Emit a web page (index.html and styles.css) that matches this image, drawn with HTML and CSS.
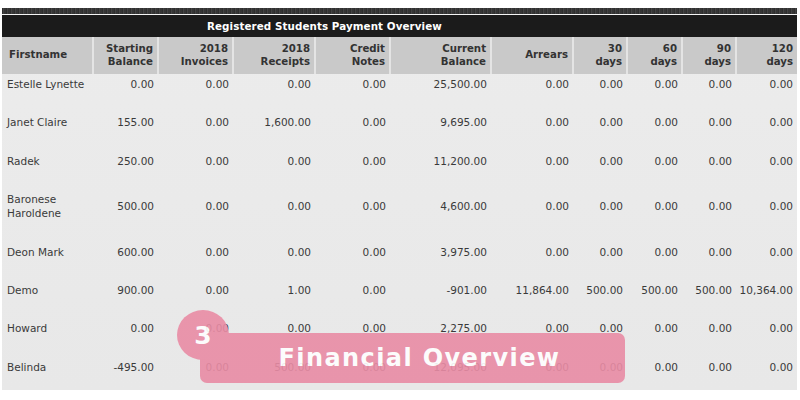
FILE: index.html
```html
<!DOCTYPE html>
<html>
<head>
<meta charset="utf-8">
<link rel="stylesheet" href="styles.css">
</head>
<body>
<div class="page">
  <div class="topbar"></div>
  <div class="titlebar"><span class="title">Registered Students Payment Overview</span></div>
  <table class="grid">
    <colgroup>
      <col style="width:91px"><col style="width:65px"><col style="width:75px"><col style="width:82px"><col style="width:75px"><col style="width:101px"><col style="width:82px"><col style="width:54px"><col style="width:55px"><col style="width:54px"><col style="width:61px">
    </colgroup>
    <thead>
      <tr>
        <th class="name">Firstname</th>
        <th>Starting<br>Balance</th>
        <th>2018<br>Invoices</th>
        <th>2018<br>Receipts</th>
        <th>Credit<br>Notes</th>
        <th>Current<br>Balance</th>
        <th>Arrears</th>
        <th>30<br>days</th>
        <th>60<br>days</th>
        <th>90<br>days</th>
        <th>120<br>days</th>
      </tr>
    </thead>
    <tbody>
      <tr><td class="name">Estelle Lynette</td><td>0.00</td><td>0.00</td><td>0.00</td><td>0.00</td><td>25,500.00</td><td>0.00</td><td>0.00</td><td>0.00</td><td>0.00</td><td>0.00</td></tr>
      <tr><td class="name">Janet Claire</td><td>155.00</td><td>0.00</td><td>1,600.00</td><td>0.00</td><td>9,695.00</td><td>0.00</td><td>0.00</td><td>0.00</td><td>0.00</td><td>0.00</td></tr>
      <tr><td class="name">Radek</td><td>250.00</td><td>0.00</td><td>0.00</td><td>0.00</td><td>11,200.00</td><td>0.00</td><td>0.00</td><td>0.00</td><td>0.00</td><td>0.00</td></tr>
      <tr><td class="name">Baronese<br>Haroldene</td><td>500.00</td><td>0.00</td><td>0.00</td><td>0.00</td><td>4,600.00</td><td>0.00</td><td>0.00</td><td>0.00</td><td>0.00</td><td>0.00</td></tr>
      <tr><td class="name">Deon Mark</td><td>600.00</td><td>0.00</td><td>0.00</td><td>0.00</td><td>3,975.00</td><td>0.00</td><td>0.00</td><td>0.00</td><td>0.00</td><td>0.00</td></tr>
      <tr><td class="name">Demo</td><td>900.00</td><td>0.00</td><td>1.00</td><td>0.00</td><td>-901.00</td><td>11,864.00</td><td>500.00</td><td>500.00</td><td>500.00</td><td>10,364.00</td></tr>
      <tr><td class="name">Howard</td><td>0.00</td><td>0.00</td><td>0.00</td><td>0.00</td><td>2,275.00</td><td>0.00</td><td>0.00</td><td>0.00</td><td>0.00</td><td>0.00</td></tr>
      <tr><td class="name">Belinda</td><td>-495.00</td><td>0.00</td><td>500.00</td><td>0.00</td><td>12,095.00</td><td>0.00</td><td>0.00</td><td>0.00</td><td>0.00</td><td>0.00</td></tr>
    </tbody>
  </table>
  <div class="badge">
    <div class="badge-label">Financial Overview</div>
    <div class="badge-num">3</div>
  </div>
</div>
</body>
</html>
```

FILE: styles.css
```css
html, body {
  margin: 0;
  padding: 0;
  background: #ffffff;
}
body {
  font-family: "DejaVu Sans", Verdana, sans-serif;
  color: #333333;
  width: 800px;
  height: 400px;
  overflow: hidden;
}
.page {
  position: relative;
  margin: 8px 3px 0 2px;
  height: 382px;
  background: linear-gradient(#ececec, #e8e8e8);
}
.topbar {
  height: 6px;
  background-color: #383838;
  background-image: repeating-linear-gradient(90deg, #2e2e2e 0 1px, #444 1px 2px, #363636 2px 4px);
  border-bottom: 1px solid #f4f4f4;
}
.titlebar {
  height: 22px;
  background: #1b1b1b;
  display: flex;
  align-items: center;
  padding-left: 205px;
}
.title {
  color: #ffffff;
  font-weight: bold;
  font-size: 10.3px;
  letter-spacing: 0.1px;
}
.grid {
  width: 795px;
  table-layout: fixed;
  border-collapse: collapse;
  font-size: 10.5px;
}
.grid th {
  background: #c9c9c9;
  font-weight: bold;
  font-size: 10.2px;
  text-align: right;
  line-height: 12.5px;
  height: 37px;
  padding: 0 4px 0 0;
  border-left: 2px solid #e4e4e4;
  color: #333;
}
.grid th:first-child {
  border-left: none;
}
.grid th.name {
  text-align: left;
  padding-left: 7px;
}
.grid td {
  text-align: right;
  line-height: 14px;
  padding: 3px 4px 21.4px 0;
  vertical-align: middle;
  white-space: nowrap;
  color: #3a3a3a;
}
.grid td.name {
  text-align: left;
  padding-left: 5px;
}
.badge {
  position: absolute;
  left: 175px;
  top: 302px;
  width: 450px;
  height: 74px;
  opacity: 0.9;
}
.badge-num {
  position: absolute;
  left: 0;
  top: 0;
  width: 52px;
  height: 50px;
  border-radius: 50%;
  background: #e98ca5;
  color: #ffffff;
  font-weight: bold;
  font-size: 25px;
  display: flex;
  align-items: center;
  justify-content: center;
  padding-top: 1px;
  box-sizing: border-box;
}
.badge-label {
  position: absolute;
  left: 23px;
  top: 23px;
  width: 425px;
  height: 50px;
  border-radius: 7px;
  background: #e98ca5;
  color: #ffffff;
  font-weight: bold;
  font-size: 24px;
  letter-spacing: 1.4px;
  display: flex;
  align-items: center;
  justify-content: center;
  padding-left: 14px;
  box-sizing: border-box;
}
```
